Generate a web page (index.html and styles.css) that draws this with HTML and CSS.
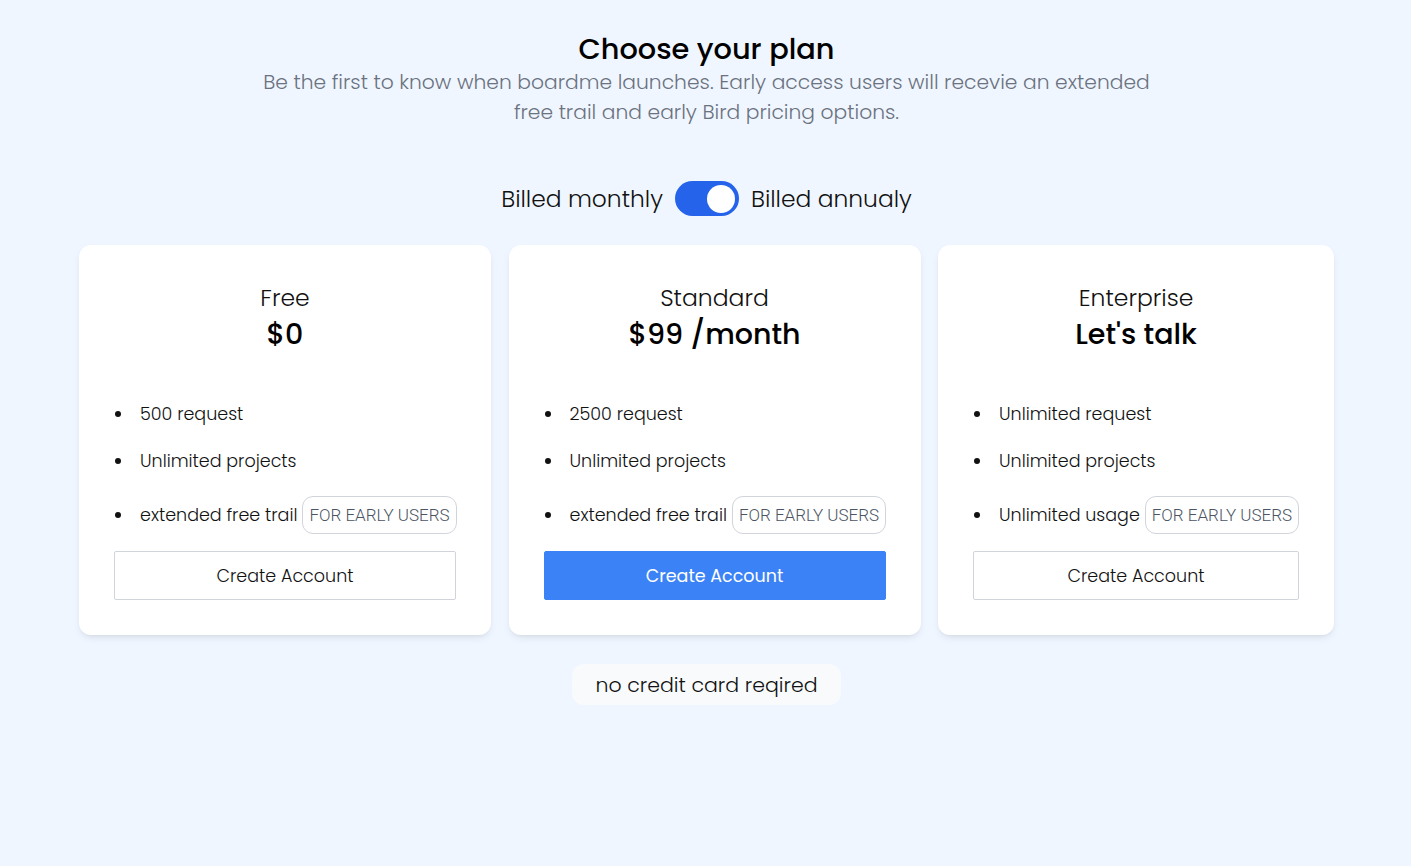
FILE: index.html
```html
<!DOCTYPE html>
<html lang="en">
<head>
<meta charset="utf-8">
<title>Choose your plan</title>
<link rel="stylesheet" href="styles.css">
</head>
<body>
<main class="page">
  <header class="intro">
    <h1 class="title">Choose your plan</h1>
    <p class="subtitle">Be the first to know when boardme launches. Early access users will recevie an extended free trail and early Bird pricing options.</p>
  </header>

  <div class="billing">
    <span class="billing-label">Billed monthly</span>
    <span class="toggle" role="switch" aria-checked="true"><span class="knob"></span></span>
    <span class="billing-label">Billed annualy</span>
  </div>

  <section class="plans">
    <article class="card">
      <div class="card-head">
        <h2 class="plan-name">Free</h2>
        <p class="plan-price">$0</p>
      </div>
      <ul class="features">
        <li>500 request</li>
        <li>Unlimited projects</li>
        <li>extended free trail<span class="badge">FOR EARLY USERS</span></li>
      </ul>
      <button class="btn">Create Account</button>
    </article>

    <article class="card">
      <div class="card-head">
        <h2 class="plan-name">Standard</h2>
        <p class="plan-price">$99 /month</p>
      </div>
      <ul class="features">
        <li>2500 request</li>
        <li>Unlimited projects</li>
        <li>extended free trail<span class="badge">FOR EARLY USERS</span></li>
      </ul>
      <button class="btn btn-primary">Create Account</button>
    </article>

    <article class="card">
      <div class="card-head">
        <h2 class="plan-name">Enterprise</h2>
        <p class="plan-price">Let's talk</p>
      </div>
      <ul class="features">
        <li>Unlimited request</li>
        <li>Unlimited projects</li>
        <li>Unlimited usage<span class="badge">FOR EARLY USERS</span></li>
      </ul>
      <button class="btn">Create Account</button>
    </article>
  </section>

  <div class="note-row">
    <p class="note">no credit card reqired</p>
  </div>
</main>
</body>
</html>
```

FILE: styles.css
```css
* { box-sizing: border-box; }

html, body {
  margin: 0;
  padding: 0;
}

body {
  background: #eff6ff;
  font-family: "Poppins", "Inter", "Noto Sans", sans-serif;
  color: #111;
  min-height: 866px;
}

.page {
  display: flex;
  flex-direction: column;
  align-items: center;
  padding: 31px 0 0 2px;
}

.intro {
  display: flex;
  flex-direction: column;
  align-items: center;
  text-align: center;
}

.title {
  margin: 0;
  font-size: 28.8px;
  line-height: 36px;
  font-weight: 500;
  color: #000;
}

.subtitle {
  margin: 0;
  width: 900px;
  font-size: 20.3px;
  line-height: 30px;
  font-weight: 300;
  color: #6b7280;
}

.billing {
  display: flex;
  align-items: center;
  gap: 12px;
  margin-top: 54px;
}

.billing-label {
  font-size: 23.4px;
  line-height: 32px;
  font-weight: 300;
  color: #111;
}

.toggle {
  display: flex;
  align-items: center;
  justify-content: flex-end;
  width: 64px;
  height: 35px;
  padding: 0 4px;
  border-radius: 18px;
  background: #2563eb;
}

.knob {
  width: 28px;
  height: 28px;
  border-radius: 50%;
  background: #fff;
}

.plans {
  display: grid;
  grid-template-columns: 412px 412px 396px;
  gap: 17.5px;
  margin-top: 29px;
}

.card {
  display: flex;
  flex-direction: column;
  background: #fff;
  border-radius: 12px;
  padding: 35px;
  box-shadow: 0 4px 8px -2px rgba(0, 0, 0, 0.10), 0 2px 4px -2px rgba(0, 0, 0, 0.06);
}

.card-head {
  display: flex;
  flex-direction: column;
  align-items: center;
}

.plan-name {
  margin: 0;
  font-size: 23.5px;
  line-height: 36px;
  font-weight: 300;
  color: #111;
}

.plan-price {
  margin: 0;
  font-size: 28.5px;
  line-height: 37px;
  font-weight: 500;
  color: #000;
}

.features {
  list-style: none;
  margin: 49px 0 0;
  padding: 0;
  display: flex;
  flex-direction: column;
  gap: 23px;
  font-size: 17.5px;
  line-height: 24px;
  font-weight: 300;
  color: #111;
}

.features li {
  display: flex;
  align-items: center;
  white-space: nowrap;
}

.features li::before {
  content: "";
  flex: none;
  width: 6px;
  height: 6px;
  margin: 0 19px 0 1px;
  border-radius: 50%;
  background: #111;
}

.badge {
  flex: none;
  margin-left: 5px;
  padding: 6px 6px;
  border: 1px solid #d1d5db;
  border-radius: 11px;
  font-family: "Roboto", "Liberation Sans", sans-serif;
  font-size: 17px;
  line-height: 24px;
  font-weight: 300;
  color: #4b5563;
}

.btn {
  margin-top: 17px;
  height: 49px;
  width: 100%;
  background: #fff;
  border: 1px solid #d1d5db;
  border-radius: 2px;
  font-family: inherit;
  font-size: 17.5px;
  font-weight: 300;
  color: #111;
}

.btn-primary {
  background: #3b82f6;
  border-color: #3b82f6;
  color: #fff;
  font-weight: 400;
}

.note-row {
  margin-top: 29px;
}

.note {
  margin: 0;
  padding: 6px 24px;
  background: #f8fafc;
  border-radius: 12px;
  font-size: 20.5px;
  line-height: 29px;
  font-weight: 300;
  color: #111;
}
```
